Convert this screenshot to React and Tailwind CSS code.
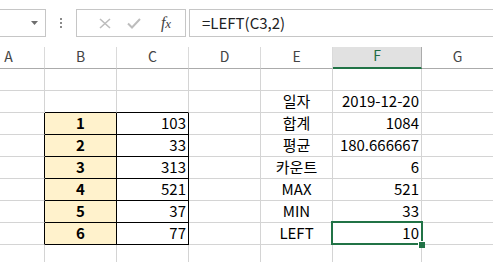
import React from 'react';

const COLS = ['A', 'B', 'C', 'D', 'E', 'F', 'G'];

const DATA = {
  2: { E: '일자', F: '2019-12-20' },
  3: { B: '1', C: '103', E: '합계', F: '1084' },
  4: { B: '2', C: '33', E: '평균', F: '180.666667' },
  5: { B: '3', C: '313', E: '카운트', F: '6' },
  6: { B: '4', C: '521', E: 'MAX', F: '521' },
  7: { B: '5', C: '37', E: 'MIN', F: '33' },
  8: { B: '6', C: '77', E: 'LEFT', F: '10' },
};

function Cell({ r, c }) {
  const v = (DATA[r] && DATA[r][c]) || '';
  const inTable = r >= 3 && r <= 8;
  const rightBlack = inTable && (c === 'A' || c === 'B' || c === 'C');
  const bottomBlack = r >= 2 && r <= 8 && (c === 'B' || c === 'C');
  const selected = r === 8 && c === 'F';
  const isB = c === 'B' && inTable;
  let cls = 'relative h-[22px] border-r border-b flex items-end pb-[2px] text-[15px] leading-[18px] text-black whitespace-nowrap ';
  cls += rightBlack ? 'border-r-black ' : 'border-r-[#d4d4d4] ';
  cls += bottomBlack ? 'border-b-black ' : 'border-b-[#d4d4d4] ';
  if (isB) cls += 'bg-[#fff2cc] justify-center font-bold ';
  else if (c === 'E') cls += 'justify-center ';
  else cls += 'justify-end pr-[2px] ';
  if (selected) cls += 'z-10 ';
  return (
    <div className={cls}>
      <span>{v}</span>
      {selected && (
        <>
          <div className="absolute left-[-2px] top-[-2px] w-[92px] h-[24px] border-2 border-[#217346] pointer-events-none" />
          <div className="absolute z-10 left-[85px] top-[18px] w-[6px] h-[6px] bg-[#217346] border-l border-t border-white box-content" />
        </>
      )}
    </div>
  );
}

export default function App() {
  return (
    <div className="w-[493px] h-[262px] overflow-hidden bg-white font-['Noto_Sans_CJK_KR',sans-serif] text-[#222]">
      {/* Formula bar */}
      <div className="h-[47px] pt-[9px] flex items-start">
        <div className="w-[46px] h-[28px] border border-l-0 border-[#c6c6c6] flex items-center justify-end pr-[7px]">
          <svg width="7" height="4" viewBox="0 0 7 4"><path d="M0 0H7L3.5 4Z" fill="#6e6e6e" /></svg>
        </div>
        <div className="w-[30px] h-[28px] flex flex-col items-center justify-center gap-[2px]">
          <span className="w-[2px] h-[2px] bg-[#8a8a8a]" />
          <span className="w-[2px] h-[2px] bg-[#8a8a8a]" />
          <span className="w-[2px] h-[2px] bg-[#8a8a8a]" />
        </div>
        <div className="w-[110px] h-[28px] border border-[#c6c6c6] flex items-center">
          <div className="w-[36px] flex justify-end pr-[2px]">
            <svg width="12" height="11" viewBox="0 0 12 11"><path d="M1 1L11 10M11 1L1 10" stroke="#bdbdbd" strokeWidth="1.6" /></svg>
          </div>
          <div className="w-[38px] flex justify-center pl-[4px]">
            <svg width="14" height="11" viewBox="0 0 14 11"><path d="M1 5.5L5 9.5L13 1" stroke="#bdbdbd" strokeWidth="2" fill="none" /></svg>
          </div>
          <div className="flex-1 flex justify-center pr-[4px] font-['Liberation_Serif',serif] italic text-[16px] leading-none text-[#444]">
            <span>f<span className="text-[13px]">x</span></span>
          </div>
        </div>
        <div className="ml-[3px] flex-1 h-[28px] border border-r-0 border-[#c6c6c6] flex items-center pl-[12px] text-[15px] text-[#222]">
          =LEFT(C3,2)
        </div>
      </div>
      {/* Grid */}
      <div className="-ml-[27px] grid grid-cols-[72px_72px_72px_72px_72px_89px_72px]">
        {COLS.map((c) => (
          <div
            key={c}
            className={
              c === 'F'
                ? 'h-[22px] border-r border-r-[#ababab] border-b-2 border-b-[#217346] bg-[#e1e1e1] flex items-center justify-center pb-[3px] text-[14px] text-[#1f6b43]'
                : 'h-[22px] border-r border-r-[#dadada] border-b border-b-[#ababab] flex items-center justify-center pb-[3px] text-[14px] text-[#444]'
            }
          >
            {c}
          </div>
        ))}
        {[1, 2, 3, 4, 5, 6, 7, 8, 9].map((r) =>
          COLS.map((c) => <Cell key={r + c} r={r} c={c} />)
        )}
      </div>
    </div>
  );
}
